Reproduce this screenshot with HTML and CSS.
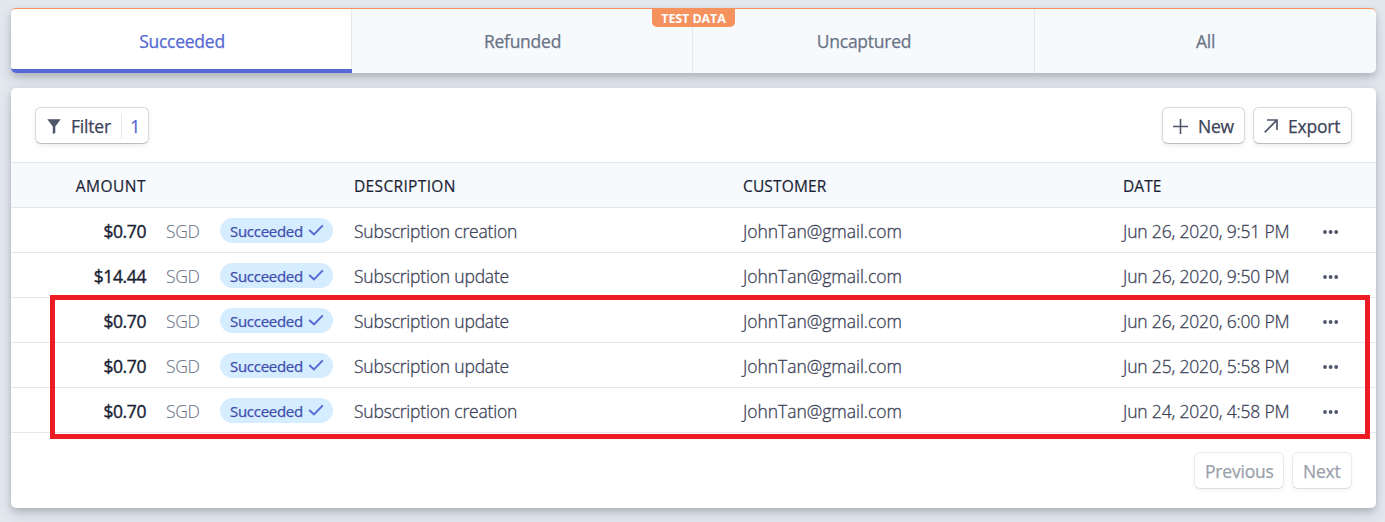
FILE: index.html
```html
<!DOCTYPE html>
<html lang="en">
<head>
<meta charset="utf-8">
<title>Payments</title>
<link rel="stylesheet" href="styles.css">
</head>
<body>
<svg class="sprite" width="0" height="0">
  <symbol id="check" viewBox="0 0 16 12"><path d="M1.2 6 L6 10.5 L14.8 1.3" fill="none" stroke="#5469d4" stroke-width="1.9"/></symbol>
  <symbol id="dots" viewBox="0 0 16 4"><g fill="#4f566b"><circle cx="2" cy="2" r="1.9"/><circle cx="7.6" cy="2" r="1.9"/><circle cx="13.2" cy="2" r="1.9"/></g></symbol>
</svg>
<main class="page">
  <nav class="tabs">
    <a class="tab active"><span>Succeeded</span></a>
    <a class="tab"><span>Refunded</span></a>
    <a class="tab"><span>Uncaptured</span></a>
    <a class="tab"><span>All</span></a>
    <div class="flag"><span>TEST DATA</span></div>
  </nav>
  <section class="panel">
    <div class="toolbar">
      <button class="btn filter">
        <svg width="14" height="15" viewBox="0 0 14 15"><path d="M.3 .3H13.7L8.3 7.4V14L5.8 15V7.4Z" fill="#4f566b"/></svg>
        <span class="label">Filter</span><span class="count">1</span>
      </button>
      <button class="btn new">
        <svg width="15" height="15" viewBox="0 0 15 15"><path d="M7.5 0V15M0 7.5H15" stroke="#4f566b" stroke-width="1.6"/></svg>
        <span>New</span>
      </button>
      <button class="btn export">
        <svg width="14" height="14" viewBox="0 0 14 14"><path d="M.7 13.3L12.8 1.2M3 1H13V11" fill="none" stroke="#4f566b" stroke-width="1.7"/></svg>
        <span>Export</span>
      </button>
    </div>
    <div class="row head">
      <span class="amount">AMOUNT</span><span></span><span></span>
      <span class="h-desc">DESCRIPTION</span><span class="h-cust">CUSTOMER</span><span class="h-date">DATE</span><span></span>
    </div>
    <div class="row">
      <span class="amount">$0.70</span><span class="cur">SGD</span><span class="badge"><span>Succeeded</span><svg width="16" height="12"><use href="#check"/></svg></span>
      <span class="desc">Subscription creation</span><span class="cust">JohnTan@gmail.com</span><span class="date">Jun 26, 2020, 9:51 PM</span><svg class="dots" width="16" height="4"><use href="#dots"/></svg>
    </div>
    <div class="row">
      <span class="amount">$14.44</span><span class="cur">SGD</span><span class="badge"><span>Succeeded</span><svg width="16" height="12"><use href="#check"/></svg></span>
      <span class="desc">Subscription update</span><span class="cust">JohnTan@gmail.com</span><span class="date">Jun 26, 2020, 9:50 PM</span><svg class="dots" width="16" height="4"><use href="#dots"/></svg>
    </div>
    <div class="row">
      <span class="amount">$0.70</span><span class="cur">SGD</span><span class="badge"><span>Succeeded</span><svg width="16" height="12"><use href="#check"/></svg></span>
      <span class="desc">Subscription update</span><span class="cust">JohnTan@gmail.com</span><span class="date">Jun 26, 2020, 6:00 PM</span><svg class="dots" width="16" height="4"><use href="#dots"/></svg>
    </div>
    <div class="row">
      <span class="amount">$0.70</span><span class="cur">SGD</span><span class="badge"><span>Succeeded</span><svg width="16" height="12"><use href="#check"/></svg></span>
      <span class="desc">Subscription update</span><span class="cust">JohnTan@gmail.com</span><span class="date">Jun 25, 2020, 5:58 PM</span><svg class="dots" width="16" height="4"><use href="#dots"/></svg>
    </div>
    <div class="row">
      <span class="amount">$0.70</span><span class="cur">SGD</span><span class="badge"><span>Succeeded</span><svg width="16" height="12"><use href="#check"/></svg></span>
      <span class="desc">Subscription creation</span><span class="cust">JohnTan@gmail.com</span><span class="date">Jun 24, 2020, 4:58 PM</span><svg class="dots" width="16" height="4"><use href="#dots"/></svg>
    </div>
    <div class="pager">
      <button class="btn prev" disabled>Previous</button>
      <button class="btn next" disabled>Next</button>
    </div>
    <div class="highlight"></div>
  </section>
</main>
</body>
</html>
```

FILE: styles.css
```css
* { box-sizing: border-box; }
body {
  margin: 0;
  height: 522px;
  overflow: hidden;
  background: #e3e8ef;
  font-family: "Open Sans", "Noto Sans", sans-serif;
  font-size: 17.5px;
  color: #3c4257;
  white-space: nowrap;
}
.sprite { display: block; }
svg { flex: none; }
.page { padding: 8px 9px 14px 11px; display: flex; flex-direction: column; gap: 15px; }
.tabs, .panel {
  position: relative;
  border-radius: 5px;
  box-shadow: 0 7px 14px rgba(60, 66, 87, .14), 0 3px 6px rgba(0, 0, 0, .16);
}
.tabs { display: grid; grid-template-columns: 341px 341px 342px 1fr; height: 65px; background: #f7fafc; border-top: 1px solid #f5925e; }
.tab {
  display: flex;
  align-items: center;
  justify-content: center;
  padding-left: 1px;
  border-right: 1px solid #e3e8ee;
  color: #697386;
  letter-spacing: -.25px;
  -webkit-text-stroke: .25px;
}
.tab:nth-child(4) { padding-right: 1px; border-right: 0; border-radius: 0 5px 5px 0; }
.tab.active {
  background: #fff;
  color: #5469d4;
  border-bottom: 4px solid #5469d4;
  border-right: 0;
  border-radius: 5px 0 0 5px;
  box-shadow: inset -1px 0 #e3e8ee;
  padding-top: 4px;
}
.flag {
  position: absolute;
  left: 641px;
  top: 0;
  width: 83px;
  height: 18px;
  border-radius: 0 0 5px 5px;
  background: #f5925e;
  color: #fff;
  font-size: 12.5px;
  font-weight: 700;
  letter-spacing: -.1px;
  line-height: 19px;
  text-align: center;
}
.panel { height: 420px; background: #fff; }
.toolbar { display: flex; gap: 8px; height: 74px; padding: 19px 24px 0; }
.btn {
  display: flex;
  align-items: center;
  height: 37px;
  padding: 1px 10px 0;
  border: 1px solid #d6d8dd;
  border-bottom-color: #babcc2;
  border-radius: 6px;
  background: #fff;
  box-shadow: 0 2px 4px rgba(60, 66, 87, .09);
  color: #3c4257;
  font: 400 17.5px "Open Sans", "Noto Sans", sans-serif;
  letter-spacing: -.2px;
  -webkit-text-stroke: .25px;
}
.filter { width: 114px; padding-left: 11px; padding-right: 8px; margin-right: auto; }
.filter .label { width: 51px; margin-left: 10px; text-align: left; }
.filter .count { height: 25px; line-height: 25px; border-left: 1px solid #e3e8ee; padding-left: 8px; color: #5469d4; }
.new { width: 83px; gap: 10px; }
.export { width: 99px; gap: 10px; }
.row {
  display: grid;
  grid-template-columns: 135px 74px 134px 389px 380px 199px 1fr;
  align-items: center;
  height: 45px;
  border-bottom: 1px solid #e3e8ee;
  padding-top: 1px;
}
.amount { text-align: right; color: #1a1f36; letter-spacing: -.4px; -webkit-text-stroke: .4px; }
.cur { padding-left: 20px; color: #697386; font-weight: 300; letter-spacing: -.3px; -webkit-text-stroke: .1px; }
.head { height: 46px; border-top: 1px solid #e3e8ee; background: #f7fafc; color: #1a1f36; font-size: 15.5px; letter-spacing: .35px; -webkit-text-stroke: .2px; }
.head .amount { letter-spacing: .5px; -webkit-text-stroke: .2px; }
.head .h-cust { letter-spacing: .15px; }
.head .h-date { letter-spacing: .05px; }
.badge {
  display: flex;
  align-items: center;
  justify-content: space-between;
  width: 113px;
  height: 25px;
  margin-top: -1px;
  padding: 0 9px 0 10px;
  border-radius: 13px;
  background: #d6ecff;
  color: #3d4eac;
  font-size: 15px;
  letter-spacing: -.28px;
  -webkit-text-stroke: .25px;
}
.badge > span { padding-top: 2px; }
.badge svg { margin-top: -1px; }
.desc, .cust, .date { font-weight: 300; letter-spacing: -.2px; -webkit-text-stroke: .3px; }
.cust { letter-spacing: -.03px; }
.date { letter-spacing: -.17px; }
.dots { margin: 3px 0 0 .5px; }
.pager { display: flex; justify-content: flex-end; gap: 8px; padding: 19px 24px 0; }
.pager .btn { color: #9a9fab; border-color: #e9eaec; border-bottom-color: #dedfe2; box-shadow: 0 2px 4px rgba(60, 66, 87, .05); }
.prev { width: 90px; }
.next { width: 60px; }
.highlight { position: absolute; left: 39px; top: 207px; width: 1320px; height: 144px; border: 5px solid #ed1c24; }
```
